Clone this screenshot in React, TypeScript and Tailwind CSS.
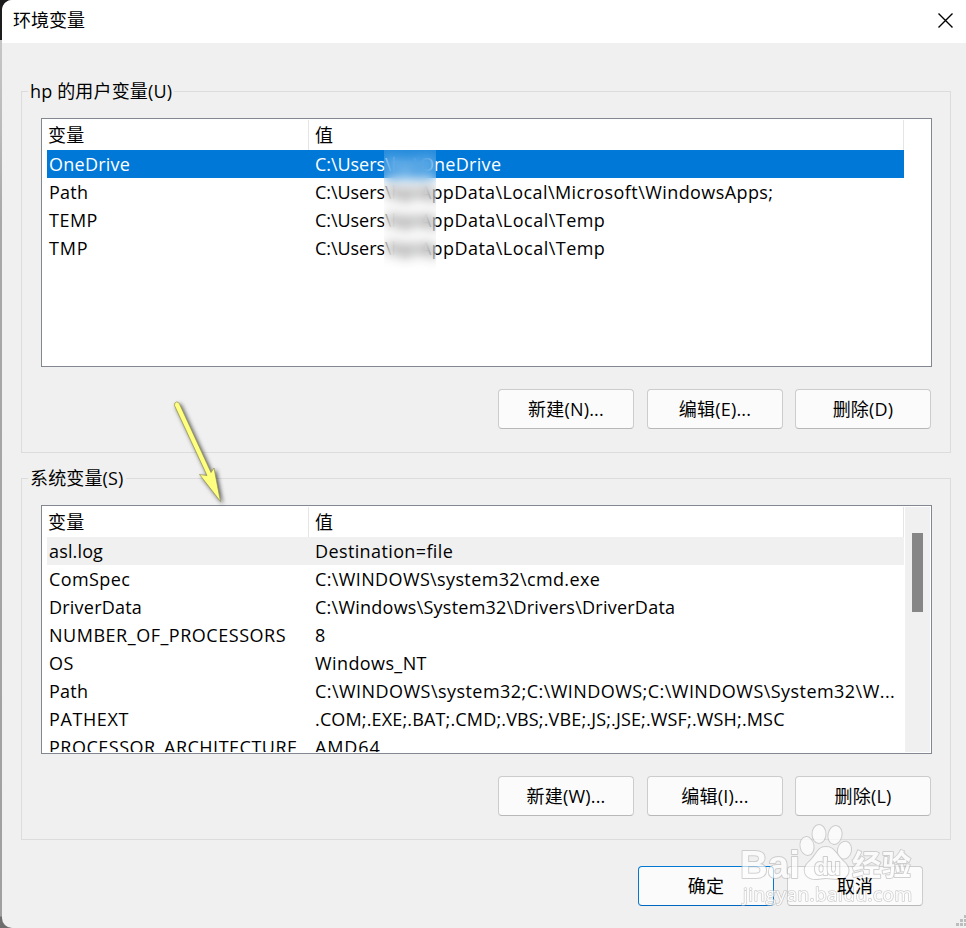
import React, { useState } from 'react';
import clsx from 'clsx';

interface Variable {
  name: string;
  value: string;
  // rest of the value, after the hidden account name
  tail?: string;
  nameClass?: string;
  valueClass?: string;
}

interface VariableListProps {
  items: Variable[];
  selected: number;
  onSelect: (index: number) => void;
  focused?: boolean;
  scrollbar?: boolean;
  children?: React.ReactNode;
}

const userVariables: Variable[] = [
  { name: 'OneDrive', nameClass: 'tracking-[0.25px]', value: 'C:\\Users\\hp\\O', tail: 'neDrive', valueClass: 'tracking-[0.3px]' },
  { name: 'Path', nameClass: 'tracking-[0.25px]', value: 'C:\\Users\\hp\\A', tail: 'ppData\\Local\\Microsoft\\WindowsApps;', valueClass: 'tracking-[0.42px]' },
  { name: 'TEMP', nameClass: 'tracking-[0.5px]', value: 'C:\\Users\\hp\\A', tail: 'ppData\\Local\\Temp', valueClass: 'tracking-[0.48px]' },
  { name: 'TMP', nameClass: 'tracking-[0.8px]', value: 'C:\\Users\\hp\\A', tail: 'ppData\\Local\\Temp', valueClass: 'tracking-[0.48px]' },
];

const systemVariables: Variable[] = [
  { name: 'asl.log', nameClass: 'tracking-[0.15px]', value: 'Destination=file', valueClass: 'tracking-[0.38px]' },
  { name: 'ComSpec', nameClass: 'tracking-[0.4px]', value: 'C:\\WINDOWS\\system32\\cmd.exe', valueClass: 'tracking-[0.37px]' },
  { name: 'DriverData', nameClass: 'tracking-[0.22px]', value: 'C:\\Windows\\System32\\Drivers\\DriverData', valueClass: 'tracking-[0.24px]' },
  { name: 'NUMBER_OF_PROCESSORS', nameClass: 'tracking-[0.52px]', value: '8' },
  { name: 'OS', nameClass: 'tracking-[0.5px]', value: 'Windows_NT', valueClass: 'tracking-[0.4px]' },
  { name: 'Path', nameClass: 'tracking-[0.25px]', value: 'C:\\WINDOWS\\system32;C:\\WINDOWS;C:\\WINDOWS\\System32\\W...', valueClass: 'tracking-[0.45px]' },
  { name: 'PATHEXT', nameClass: 'tracking-[0.6px]', value: '.COM;.EXE;.BAT;.CMD;.VBS;.VBE;.JS;.JSE;.WSF;.WSH;.MSC', valueClass: 'tracking-[0.15px]' },
  { name: 'PROCESSOR_ARCHITECTURE', nameClass: 'tracking-[0.5px]', value: 'AMD64', valueClass: 'tracking-[0.9px]' },
];

const Button: React.FC<{ primary?: boolean; children: React.ReactNode }> = ({ primary, children }) => (
  <button
    className={clsx(
      'h-10 w-[136px] rounded-[4px] border bg-[#fbfbfb] text-center leading-[38px] tracking-[0.2px]',
      primary ? 'border-[#0078d4] border-b-[#0067c0]' : 'border-[#cccccc] border-b-[#b8b8b8]'
    )}
  >
    <span className="relative z-10">{children}</span>
  </button>
);

const VariableList: React.FC<VariableListProps> = ({ items, selected, onSelect, focused, scrollbar, children }) => (
  <div className="relative flex h-[249px] w-[891px] justify-between overflow-hidden border border-[#828790] bg-white p-px">
    <div className="w-[861px] overflow-hidden">
      <div className="flex h-[30px] leading-[30px]">
        <div className="w-[266px] border-r border-[#e5e5e5] pl-[5px] tracking-[0.3px]">变量</div>
        <div className="flex-1 border-r border-[#e5e5e5] pl-[6px]">值</div>
      </div>
      {items.map((item, index) => (
        <div
          key={item.name}
          onClick={() => onSelect(index)}
          className={clsx(
            'ml-1 flex h-7 whitespace-nowrap leading-7',
            index === selected && (focused ? 'bg-[#0078d7] text-white' : 'bg-[#f0f0f0]')
          )}
        >
          <div className={clsx('w-[268px] pl-[2px]', item.nameClass)}>{item.name}</div>
          <div className={item.tail ? 'tracking-[-0.05px]' : item.valueClass}>
            {item.value}
            {item.tail && <span className={item.valueClass}>{item.tail}</span>}
          </div>
        </div>
      ))}
    </div>
    {scrollbar && (
      <div className="w-[25px] bg-[#f0f0f0] pt-[26px]">
        <div className="ml-[7px] h-[79px] w-[11px] bg-[#868686]" />
      </div>
    )}
    {children}
  </div>
);

const Group: React.FC<{ title: string; children: React.ReactNode }> = ({ title, children }) => (
  <section className="relative h-[362px] w-[930px] border border-[#dcdcdc] pl-[19px] pt-[26px]">
    <span className="absolute -top-[15px] left-[6px] bg-[#f0f0f0] px-[2px] leading-7 tracking-[0.15px]">{title}</span>
    {children}
  </section>
);

const Watermark = () => (
  <svg
    className="pointer-events-none absolute left-[738px] top-[820px]"
    width="180"
    height="92"
    fill="#ffffff"
    stroke="#bdbdbd"
    strokeWidth="2"
    strokeLinejoin="round"
    opacity="0.68"
    paintOrder="stroke"
  >
    <text x="2" y="58" fontFamily="Liberation Sans" fontWeight="700" fontSize="39" textLength="60" lengthAdjust="spacingAndGlyphs">Bai</text>
    <ellipse cx="69" cy="26" rx="6.5" ry="9" transform="rotate(-10 69 26)" />
    <ellipse cx="81" cy="14" rx="6.5" ry="9" />
    <ellipse cx="97" cy="15" rx="6.5" ry="9" transform="rotate(12 97 15)" />
    <ellipse cx="106.500" cy="30" rx="6.5" ry="8.5" transform="rotate(12 106 30)" />
    <path d="M88 27c-9 0-9 8-17 15-8 7-4 17 6 17 5 0 7-1 11-1s7 1 12 1c11 0 14-10 6-17-8-7-9-15-18-15z" />
    <text x="76" y="55" fontFamily="Liberation Sans" fontWeight="700" fontSize="24" textLength="27">du</text>
    <text x="114" y="56" fontFamily="Noto Sans CJK SC" fontWeight="700" fontSize="29" textLength="59">经验</text>
    <text x="5" y="81" fontFamily="Open Sans" fontSize="19" strokeWidth="1.6" textLength="169">jingyan.baidu.com</text>
  </svg>
);

const App: React.FC = () => {
  const [userRow, setUserRow] = useState(0);
  const [systemRow, setSystemRow] = useState(0);

  return (
    <div className="relative h-[928px] w-[966px] overflow-hidden bg-[linear-gradient(#1c1c1c_40px,#c6c6c6_40px,#bcbcbc_120px,#a8a8a8_220px,#a0a0a0_916px,#6e6e6e_917px)] pl-[2px] font-['Open_Sans','Noto_Sans_CJK_SC',sans-serif] text-[18px] text-black">
      <div className="h-full overflow-hidden rounded-l-[10px] bg-[#f0f0f0]">
        <header className="flex h-[43px] items-center justify-between bg-white pl-[11px] pr-[13px]">
          <h1 className="-mt-[3px] leading-[39px]">环境变量</h1>
          <svg width="15" height="15" viewBox="0 0 15 15" stroke="#000" strokeWidth="1.4" className="-mt-[2px]">
            <path d="M.5.5l14 14M14.5.5l-14 14" />
          </svg>
        </header>

        <main className="flex flex-col gap-[25px] pl-[19px] pt-12">
          <Group title="hp 的用户变量(U)">
            <VariableList items={userVariables} selected={userRow} onSelect={setUserRow} focused>
              {/* hides the account name in the paths */}
              <div className="absolute left-[342px] top-[31px] h-[120px] w-[52px] bg-white/15 backdrop-blur-[6px]" />
            </VariableList>
            <div className="mt-[22px] flex pl-[457px]">
              <Button>新建(N)...</Button>
              <div className="ml-[13px] mr-3"><Button>编辑(E)...</Button></div>
              <Button>删除(D)</Button>
            </div>
          </Group>

          <Group title="系统变量(S)">
            <VariableList items={systemVariables} selected={systemRow} onSelect={setSystemRow} scrollbar />
            <div className="mt-[22px] flex pl-[457px]">
              <Button>新建(W)...</Button>
              <div className="ml-[13px] mr-3"><Button>编辑(I)...</Button></div>
              <Button>删除(L)</Button>
            </div>
          </Group>
        </main>

        <footer className="mt-[26px] flex gap-[13px] pl-[636px]">
          <Button primary>确定</Button>
          <Button>取消</Button>
        </footer>
      </div>

      {/* Arrow pointing at the system list */}
      <svg className="pointer-events-none absolute left-[165px] top-[395px] drop-shadow-[2px_2px_2px_rgba(0,0,0,0.65)]" width="70" height="115">
        <path
          d="M9.500 10.500q-.5-3 2-3.500q2-.3 3 2L46 77.500l3-4.500 6.500 33.500L34.500 79.500l7.500 1z"
          fill="#ffff80"
          stroke="#8f8f50"
          strokeWidth=".7"
        />
      </svg>

      <Watermark />

      {/* Resize grip */}
      <svg className="absolute bottom-[2px] right-0" width="10" height="11" fill="#bdbdbd">
        <path d="M8 0h3v3H8zM4 4h3v3H4zM8 4h3v3H8zM0 8h3v3H0zM4 8h3v3H4zM8 8h3v3H8z" />
      </svg>
    </div>
  );
};

export default App;
